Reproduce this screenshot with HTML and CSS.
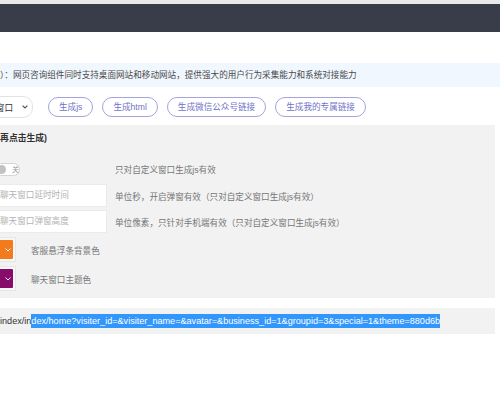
FILE: index.html
```html
<!DOCTYPE html>
<html lang="zh-CN">
<head>
<meta charset="utf-8">
<title>网页咨询组件</title>
<link rel="stylesheet" href="styles.css">
</head>
<body>
<div class="topline"></div>
<header class="header"></header>
<div class="notice">）：网页咨询组件同时支持桌面网站和移动网站，提供强大的用户行为采集能力和系统对接能力</div>
<div class="toolbar">
  <div class="select"><span class="select-text">自定义窗口</span><svg class="chev" width="6" height="4" viewBox="0 0 6 4"><path d="M0.6 0.6 L3 3 L5.4 0.6" fill="none" stroke="#555" stroke-width="1.2"/></svg></div>
  <span class="btn">生成js</span>
  <span class="btn">生成html</span>
  <span class="btn">生成微信公众号链接</span>
  <span class="btn">生成我的专属链接</span>
</div>
<section class="panel">
  <div class="panel-title">(请先设置再点击生成)</div>
  <div class="row row-switch">
    <div class="field"><span class="switch"><i class="knob"></i><em>关</em></span></div>
    <div class="hint">只对自定义窗口生成js有效</div>
  </div>
  <div class="row row-input">
    <div class="field"><div class="input">聊天窗口延时时间</div></div>
    <div class="hint">单位秒，开启弹窗有效（只对自定义窗口生成js有效）</div>
  </div>
  <div class="row row-input">
    <div class="field"><div class="input">聊天窗口弹窗高度</div></div>
    <div class="hint">单位像素，只针对手机端有效（只对自定义窗口生成js有效）</div>
  </div>
  <div class="row row-color">
    <span class="swatch"><span class="swatch-in orange"><svg width="6" height="4" viewBox="0 0 6 4"><path d="M0.5 0.5 L3 3 L5.5 0.5" fill="none" stroke="#fff" stroke-width="1"/></svg></span></span>
    <span class="color-label">客服悬浮条背景色</span>
  </div>
  <div class="row row-color">
    <span class="swatch"><span class="swatch-in purple"><svg width="6" height="4" viewBox="0 0 6 4"><path d="M0.5 0.5 L3 3 L5.5 0.5" fill="none" stroke="#fff" stroke-width="1"/></svg></span></span>
    <span class="color-label">聊天窗口主题色</span>
  </div>
</section>
<div class="url">index/in<span class="sel">dex/home?visiter_id=&amp;visiter_name=&amp;avatar=&amp;business_id=1&amp;groupid=3&amp;special=1&amp;theme=880d6b</span></div>
</body>
</html>
```

FILE: styles.css
```css
html, body {
  margin: 0;
  padding: 0;
  background: #fff;
  overflow: hidden;
}
body {
  width: 500px;
  height: 400px;
  font-family: "Liberation Sans", "Noto Sans CJK SC", sans-serif;
  font-size: 8.6px;
  color: #555;
}
.topline {
  height: 4px;
  background: #e9e9ea;
}
.header {
  height: 28px;
  background: #393d49;
}
.notice {
  margin-top: 31px;
  height: 24px;
  line-height: 24px;
  background: #f1f7fe;
  color: #4a4a4a;
  white-space: nowrap;
}
.toolbar {
  margin-top: 9px;
  height: 21px;
  display: flex;
  align-items: center;
  gap: 9px;
}
.select {
  box-sizing: border-box;
  margin-left: -30px;
  margin-right: 6px;
  width: 63px;
  height: 22px;
  border: 1px solid #e2e2e2;
  border-radius: 10px;
  background: #fff;
  display: flex;
  align-items: center;
  justify-content: space-between;
  padding: 0 4px 0 7px;
  color: #333;
  white-space: nowrap;
  overflow: hidden;
}
.select-text {
  margin-left: -8px;
}
.chev {
  flex: none;
}
.btn {
  box-sizing: border-box;
  height: 20px;
  line-height: 18px;
  padding: 0 10px;
  border: 1px solid #a2a4db;
  border-radius: 10px;
  color: #7073c8;
  white-space: nowrap;
  background: #fff;
}
.panel {
  margin-top: 8px;
  margin-right: 5px;
  height: 173px;
  background: #f2f2f2;
  box-sizing: border-box;
  padding-top: 7px;
  overflow: hidden;
}
.panel-title {
  margin-left: -38px;
  font-weight: bold;
  font-size: 8.8px;
  color: #333;
  line-height: 13px;
  white-space: nowrap;
}
.row {
  display: flex;
  align-items: center;
}
.field {
  width: 107px;
  margin-right: 8px;
  flex: none;
}
.row-switch {
  margin-top: 17px;
  height: 14px;
}
.switch {
  box-sizing: border-box;
  margin-left: -6px;
  width: 26px;
  height: 13px;
  border: 1px solid #d4d4d4;
  border-radius: 7px;
  background: #fff;
  display: flex;
  align-items: center;
}
.knob {
  display: block;
  width: 9px;
  height: 9px;
  border-radius: 50%;
  background: #c2c2c2;
  margin-left: 2px;
}
.switch em {
  font-style: normal;
  font-size: 7px;
  color: #999;
  margin-left: 6px;
}
.row-input {
  margin-top: 3px;
}
.row-switch + .row-input {
  margin-top: 8px;
}
.input {
  box-sizing: border-box;
  margin-left: -12px;
  width: 119px;
  height: 23px;
  line-height: 21px;
  padding-left: 11px;
  border: 1px solid #ebebeb;
  background: #fff;
  color: #b4b4b4;
  white-space: nowrap;
  overflow: hidden;
}
.hint {
  color: #777;
  white-space: nowrap;
}
.row-color {
  margin-top: 4px;
}
.swatch {
  box-sizing: border-box;
  margin-left: -10px;
  width: 26px;
  height: 25px;
  border: 1px solid #e6e6e6;
  padding: 2px;
  display: flex;
  background: #f7f7f7;
}
.swatch-in {
  flex: 1;
  display: flex;
  align-items: center;
  justify-content: center;
  padding-left: 10px;
  border-radius: 1px;
}
.orange { background: #f27b1e; }
.purple { background: #880d6b; }
.color-label {
  margin-left: 15px;
  color: #777;
}
.url {
  margin-top: 10px;
  margin-right: 5px;
  height: 26px;
  line-height: 26px;
  background: #f2f2f2;
  font-size: 9.1px;
  color: #333;
  white-space: nowrap;
  overflow: hidden;
}
.sel {
  background: #3297fd;
  color: #fff;
  padding: 2px 0;
}
```
